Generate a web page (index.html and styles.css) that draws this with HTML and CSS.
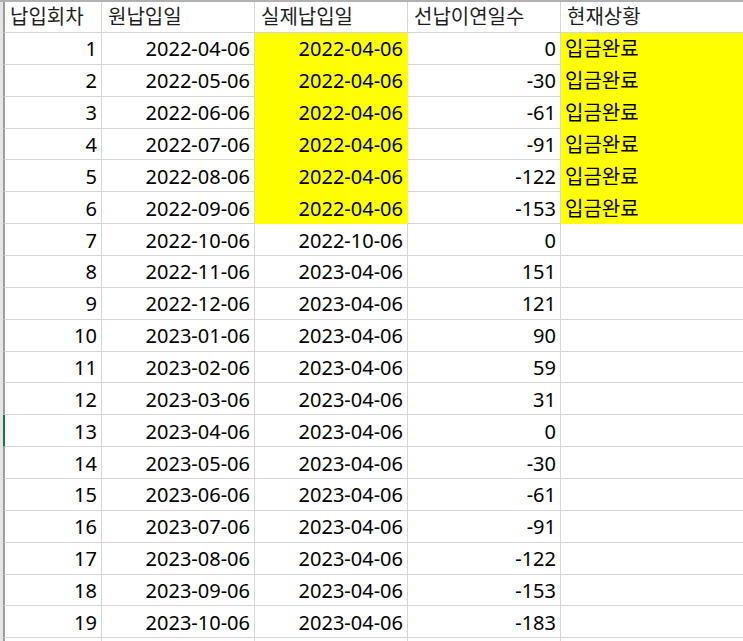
FILE: index.html
```html
<!DOCTYPE html>
<html lang="ko">
<head>
<meta charset="utf-8">
<link rel="stylesheet" href="styles.css">
</head>
<body>
<div class="sheet">
  <div class="c h first">납입회차</div><div class="c h">원납입일</div><div class="c h">실제납입일</div><div class="c h">선납이연일수</div><div class="c h last">현재상황</div>

  <div class="c n first">1</div><div class="c n">2022-04-06</div><div class="c n y">2022-04-06</div><div class="c n">0</div><div class="c t y last">입금완료</div>
  <div class="c n first">2</div><div class="c n">2022-05-06</div><div class="c n y">2022-04-06</div><div class="c n">-30</div><div class="c t y last">입금완료</div>
  <div class="c n first">3</div><div class="c n">2022-06-06</div><div class="c n y">2022-04-06</div><div class="c n">-61</div><div class="c t y last">입금완료</div>
  <div class="c n first">4</div><div class="c n">2022-07-06</div><div class="c n y">2022-04-06</div><div class="c n">-91</div><div class="c t y last">입금완료</div>
  <div class="c n first">5</div><div class="c n">2022-08-06</div><div class="c n y">2022-04-06</div><div class="c n">-122</div><div class="c t y last">입금완료</div>
  <div class="c n first">6</div><div class="c n">2022-09-06</div><div class="c n y">2022-04-06</div><div class="c n">-153</div><div class="c t y last">입금완료</div>
  <div class="c n first">7</div><div class="c n">2022-10-06</div><div class="c n">2022-10-06</div><div class="c n">0</div><div class="c t last"></div>
  <div class="c n first">8</div><div class="c n">2022-11-06</div><div class="c n">2023-04-06</div><div class="c n">151</div><div class="c t last"></div>
  <div class="c n first">9</div><div class="c n">2022-12-06</div><div class="c n">2023-04-06</div><div class="c n">121</div><div class="c t last"></div>
  <div class="c n first">10</div><div class="c n">2023-01-06</div><div class="c n">2023-04-06</div><div class="c n">90</div><div class="c t last"></div>
  <div class="c n first">11</div><div class="c n">2023-02-06</div><div class="c n">2023-04-06</div><div class="c n">59</div><div class="c t last"></div>
  <div class="c n first">12</div><div class="c n">2023-03-06</div><div class="c n">2023-04-06</div><div class="c n">31</div><div class="c t last"></div>
  <div class="c n first active">13</div><div class="c n">2023-04-06</div><div class="c n">2023-04-06</div><div class="c n">0</div><div class="c t last"></div>
  <div class="c n first">14</div><div class="c n">2023-05-06</div><div class="c n">2023-04-06</div><div class="c n">-30</div><div class="c t last"></div>
  <div class="c n first">15</div><div class="c n">2023-06-06</div><div class="c n">2023-04-06</div><div class="c n">-61</div><div class="c t last"></div>
  <div class="c n first">16</div><div class="c n">2023-07-06</div><div class="c n">2023-04-06</div><div class="c n">-91</div><div class="c t last"></div>
  <div class="c n first">17</div><div class="c n">2023-08-06</div><div class="c n">2023-04-06</div><div class="c n">-122</div><div class="c t last"></div>
  <div class="c n first">18</div><div class="c n">2023-09-06</div><div class="c n">2023-04-06</div><div class="c n">-153</div><div class="c t last"></div>
  <div class="c n first">19</div><div class="c n">2023-10-06</div><div class="c n">2023-04-06</div><div class="c n">-183</div><div class="c t last"></div>
  <div class="c n first"></div><div class="c n"></div><div class="c n"></div><div class="c n"></div><div class="c t last"></div>
</div>
</body>
</html>
```

FILE: styles.css
```css
html, body {
  margin: 0;
  padding: 0;
  background: #ffffff;
  overflow: hidden;
}
.sheet {
  width: 743px;
  height: 641px;
  overflow: hidden;
  box-sizing: border-box;
  border-top: 2px solid #b1b1b1;
  padding-left: 3px;
  background: #e4e4e4;
  display: grid;
  grid-template-columns: 99px 153px 153px 153px 1fr;
  grid-template-rows: 31px repeat(20, 31.86px);
  font-family: "Noto Sans", "Noto Sans CJK KR", sans-serif;
  font-size: 20px;
  color: #000000;
}
.c {
  box-sizing: border-box;
  background: #ffffff;
  border-right: 1px solid #d6d6d6;
  border-bottom: 1px solid #d6d6d6;
  display: flex;
  align-items: center;
  white-space: nowrap;
  overflow: hidden;
  line-height: 1;
  padding-top: 2px;
}
.first {
  border-left: 2px solid #9d9d9d;
}
.first.active {
  border-left-color: #217346;
}
.last {
  border-right: none;
}
.h {
  justify-content: flex-start;
  padding-left: 6px;
  color: #1e1e1e;
  padding-top: 0;
}
.h.first {
  padding-left: 5px;
}
.n {
  justify-content: flex-end;
  padding-right: 4px;
}
.t {
  justify-content: flex-start;
  padding-left: 4px;
}
.y {
  background: #ffff00;
  border-bottom-color: #ffff00;
}
.n.y {
  border-right-color: #ffff00;
}
```
